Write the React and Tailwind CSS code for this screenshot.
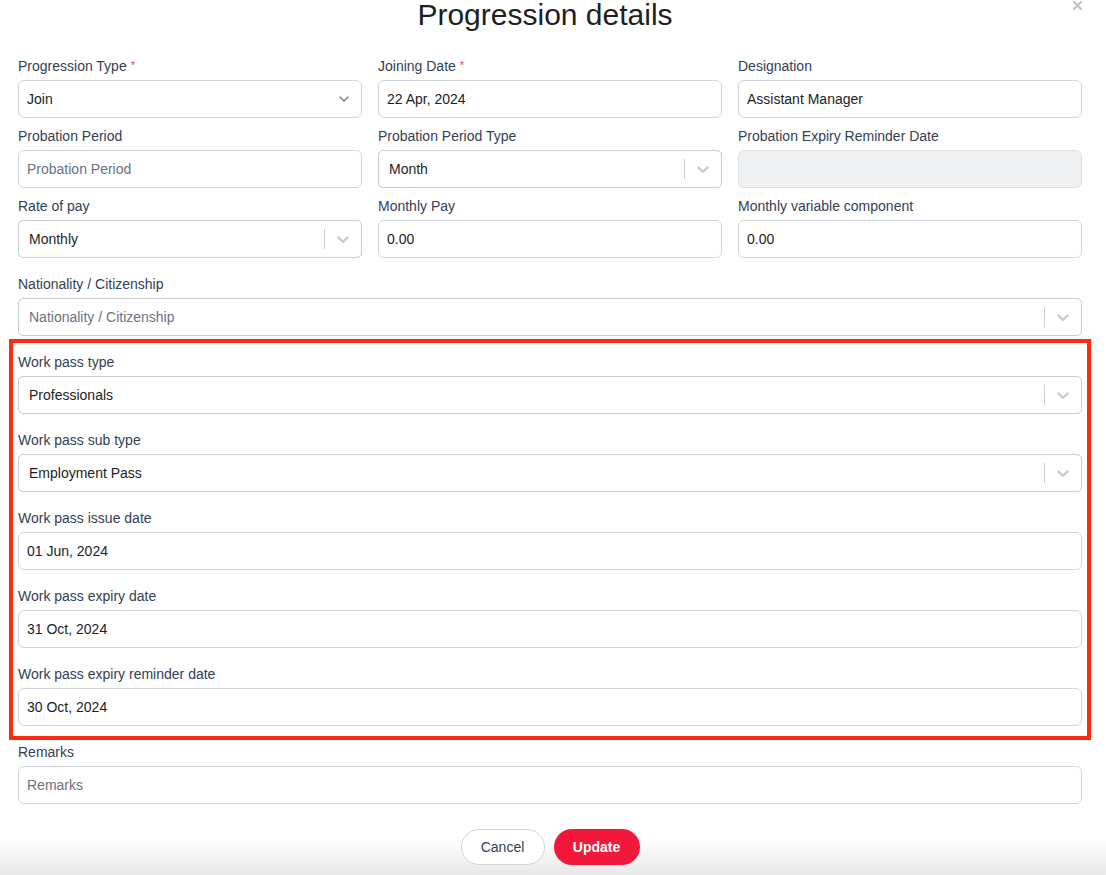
import React from 'react';

const font = { fontFamily: '"Liberation Sans", Arial, sans-serif' };

const Label = ({ children, required }) => (
  <div className="h-[20px] leading-[20px] text-[14px] text-[#344054] mb-1 whitespace-nowrap">
    {children}
    {required && <span className="text-[#ef4444] text-[11px] align-top ml-[4px] relative top-[-1px]">*</span>}
  </div>
);

const TextInput = ({ value, placeholder, disabled }) => (
  <div
    className={`h-[38px] rounded-[6px] border flex items-center px-[8px] text-[14px] ${
      disabled ? 'bg-[#eff0f2] border-[#dcdfe4]' : 'bg-white border-[#d0d5dd]'
    }`}
  >
    {value ? (
      <span className="text-[#1d1d1f]">{value}</span>
    ) : (
      <span className="text-[#6b7280]">{placeholder}</span>
    )}
  </div>
);

// plain native-looking select with a small chevron
const NativeSelect = ({ value }) => (
  <div className="h-[38px] rounded-[6px] border border-[#d0d5dd] bg-white flex items-center pl-[8px] pr-[12px] text-[14px]">
    <span className="flex-1 text-[#1d1d1f]">{value}</span>
    <svg width="10" height="6" viewBox="0 0 10 6" fill="none">
      <path d="M1 1l4 4 4-4" stroke="#6b7280" strokeWidth="1.2" strokeLinecap="round" strokeLinejoin="round" />
    </svg>
  </div>
);

// react-select style control with separator + chevron
const ComboSelect = ({ value, placeholder }) => (
  <div className="h-[38px] rounded-[5px] border border-[#cccccc] bg-white flex items-center text-[14px]">
    <div className="flex-1 pl-[10px]">
      {value ? (
        <span className="text-[#1d1d1f]">{value}</span>
      ) : (
        <span className="text-[#6b7280]">{placeholder}</span>
      )}
    </div>
    <span className="w-px h-[20px] bg-[#cccccc]" />
    <div className="p-[8px] flex">
      <svg width="20" height="20" viewBox="0 0 20 20" fill="#cccccc">
        <path d="M4.516 7.548c0.436-0.446 1.043-0.481 1.576 0l3.908 3.747 3.908-3.747c0.533-0.481 1.141-0.446 1.574 0 0.436 0.445 0.408 1.197 0 1.615-0.406 0.418-4.695 4.502-4.695 4.502-0.217 0.223-0.502 0.335-0.787 0.335s-0.57-0.112-0.789-0.335c0 0-4.287-4.084-4.695-4.502s-0.436-1.170 0-1.615z" />
      </svg>
    </div>
  </div>
);

const Field = ({ label, required, children }) => (
  <div>
    <Label required={required}>{label}</Label>
    {children}
  </div>
);

export default function App() {
  return (
    <div
      className="relative h-[875px] overflow-hidden bg-[linear-gradient(to_bottom,#ffffff_838px,#e9e9e9_875px)]"
      style={font}
    >
      {/* close */}
      <button className="absolute top-[1px] right-[24px]">
        <svg width="9" height="9" viewBox="0 0 9 9">
          <path d="M1 1l7 7M8 1l-7 7" stroke="#bdbdbd" strokeWidth="1.8" strokeLinecap="round" />
        </svg>
      </button>

      <div className="pl-[18px] pr-[24px]">
        <h2 className="text-center pr-[10px] text-[30px] leading-[30px] text-[#1f1f1f]">Progression details</h2>

        <div className="mt-[26px] grid grid-cols-3 gap-x-4 gap-y-2">
          <Field label="Progression Type" required>
            <NativeSelect value="Join" />
          </Field>
          <Field label="Joining Date" required>
            <TextInput value="22 Apr, 2024" />
          </Field>
          <Field label="Designation">
            <TextInput value="Assistant Manager" />
          </Field>

          <Field label="Probation Period">
            <TextInput placeholder="Probation Period" />
          </Field>
          <Field label="Probation Period Type">
            <ComboSelect value="Month" />
          </Field>
          <Field label="Probation Expiry Reminder Date">
            <TextInput disabled />
          </Field>

          <Field label="Rate of pay">
            <ComboSelect value="Monthly" />
          </Field>
          <Field label="Monthly Pay">
            <TextInput value="0.00" />
          </Field>
          <Field label="Monthly variable component">
            <TextInput value="0.00" />
          </Field>
        </div>

        <div className="mt-4">
          <Field label="Nationality / Citizenship">
            <ComboSelect placeholder="Nationality / Citizenship" />
          </Field>
        </div>

        {/* highlighted work pass section */}
        <div className="mt-[3px] -mx-[9px] border-4 border-[#ff2a10] px-[5px] pt-[9px] pb-[10px] flex flex-col gap-4">
          <Field label="Work pass type">
            <ComboSelect value="Professionals" />
          </Field>
          <Field label="Work pass sub type">
            <ComboSelect value="Employment Pass" />
          </Field>
          <Field label="Work pass issue date">
            <TextInput value="01 Jun, 2024" />
          </Field>
          <Field label="Work pass expiry date">
            <TextInput value="31 Oct, 2024" />
          </Field>
          <Field label="Work pass expiry reminder date">
            <TextInput value="30 Oct, 2024" />
          </Field>
        </div>

        <div className="mt-[2px]">
          <Field label="Remarks">
            <TextInput placeholder="Remarks" />
          </Field>
        </div>

        <div className="mt-[25px] flex justify-center gap-[9px]">
          <button className="h-[36px] w-[84px] rounded-full border border-[#d0d5dd] bg-white text-[14px] text-[#344054]">
            Cancel
          </button>
          <button className="h-[36px] w-[86px] rounded-full bg-[#f2183c] text-[14px] font-bold text-white">
            Update
          </button>
        </div>
      </div>
    </div>
  );
}
